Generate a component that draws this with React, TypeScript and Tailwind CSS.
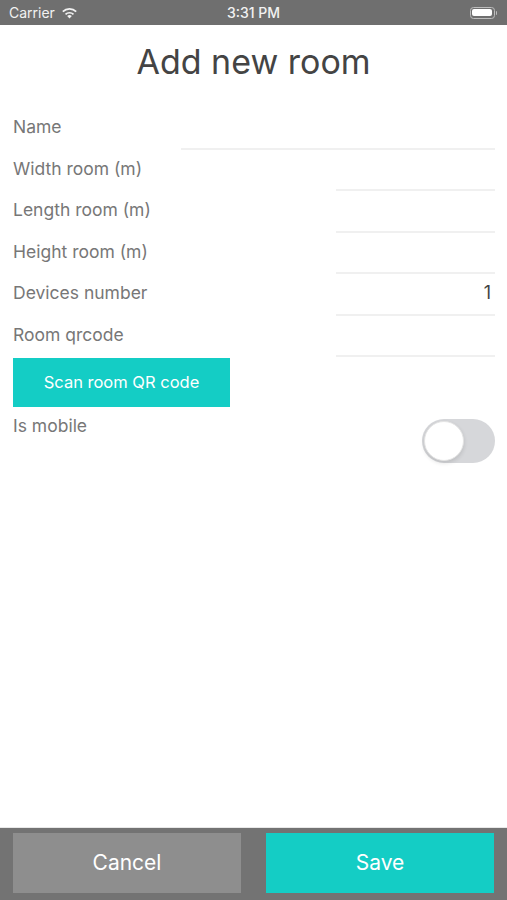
import React, { useState } from 'react'

const fields = [
  { label: 'Width room (m)', value: '' },
  { label: 'Length room (m)', value: '' },
  { label: 'Height room (m)', value: '' },
  { label: 'Devices number', value: '1' },
  { label: 'Room qrcode', value: '' }
]

function StatusBar() {
  return (
    <div className="h-[25px] bg-[#6f6f6f] flex items-center justify-between px-[9px] text-[#f2f2f2] text-[14px] relative">
      <div className="flex items-center gap-[6px]">
        <span>Carrier</span>
        <svg width="17" height="12" viewBox="0 0 17 12">
          <path d="M8.5 11.5 L6.2 9.1 A3.3 3.3 0 0 1 10.8 9.1 Z" fill="#f2f2f2" />
          <path d="M3.9 6.8 A6.5 6.5 0 0 1 13.1 6.8 L11.9 8 A4.8 4.8 0 0 0 5.1 8 Z" fill="#f2f2f2" />
          <path d="M1.2 4.1 A10.3 10.3 0 0 1 15.8 4.1 L14.6 5.3 A8.6 8.6 0 0 0 2.4 5.3 Z" fill="#f2f2f2" />
        </svg>
      </div>
      <span className="absolute left-0 right-0 text-center font-medium pointer-events-none">3:31 PM</span>
      <div className="flex items-center pr-[1px]">
        <div className="w-[25px] h-[12px] rounded-[3.5px] border border-[#bdbdbd] p-[1.5px]">
          <div className="w-full h-full bg-white rounded-[2px]" />
        </div>
        <div className="w-[1.5px] h-[4px] bg-[#bdbdbd] rounded-r-sm ml-[1px]" />
      </div>
    </div>
  )
}

export default function App() {
  const [mobile, setMobile] = useState(false)

  return (
    <div className="h-[900px] flex flex-col bg-white" style={{ fontFamily: 'Inter, "Noto Sans", sans-serif' }}>
      <StatusBar />

      <div className="flex-1 flex flex-col">
        {/* Title */}
        <h1 className="mt-[17px] h-[40px] leading-[40px] text-center text-[34px] text-[#444444]">
          Add new room
        </h1>

        {/* Form */}
        <div className="mt-[26px] pl-[13px] pr-[12px]">
          <div className="flex justify-between h-[41.5px]">
            <span className="pt-[8px] leading-[22px] text-[17.5px] text-[#777777]">Name</span>
            <div className="w-[314px] border-b-2 border-[#f0f0f0]" />
          </div>

          {fields.map((f) => (
            <div key={f.label} className="flex justify-between h-[41.5px]">
              <span className="pt-[8px] leading-[22px] text-[17.5px] text-[#777777]">{f.label}</span>
              <div className="w-[159px] border-b-2 border-[#f0f0f0] pt-[8px] pr-[4px] text-right leading-[22px] text-[18px] text-[#444444]">
                {f.value}
              </div>
            </div>
          ))}

          <button className="mt-[1px] w-[217px] h-[49px] bg-[#14cdc5] text-white text-[16.5px]">
            Scan room QR code
          </button>

          <div className="flex justify-between items-start">
            <span className="mt-[8px] leading-[22px] text-[17.5px] text-[#777777]">Is mobile</span>
            <button
              onClick={() => setMobile(!mobile)}
              className={`mt-[12px] w-[73px] h-[44px] rounded-full p-[2px] flex ${mobile ? 'bg-[#14cdc5] justify-end' : 'bg-[#d6d7da] justify-start'}`}
            >
              <div className="w-[40px] h-[40px] rounded-full bg-white border border-[#e4e4e4] shadow-[0_2px_4px_rgba(0,0,0,0.12)]" />
            </button>
          </div>
        </div>
      </div>

      {/* Bottom actions */}
      <div className="h-[73px] bg-[#737373] border-t border-[#e8e8e8] flex gap-[25px] px-[13px] pt-[5px]">
        <button className="w-[228px] h-[60px] bg-[#8e8e8e] text-white text-[21px]">Cancel</button>
        <button className="w-[228px] h-[60px] bg-[#14cdc5] text-white text-[21px]">Save</button>
      </div>
    </div>
  )
}
